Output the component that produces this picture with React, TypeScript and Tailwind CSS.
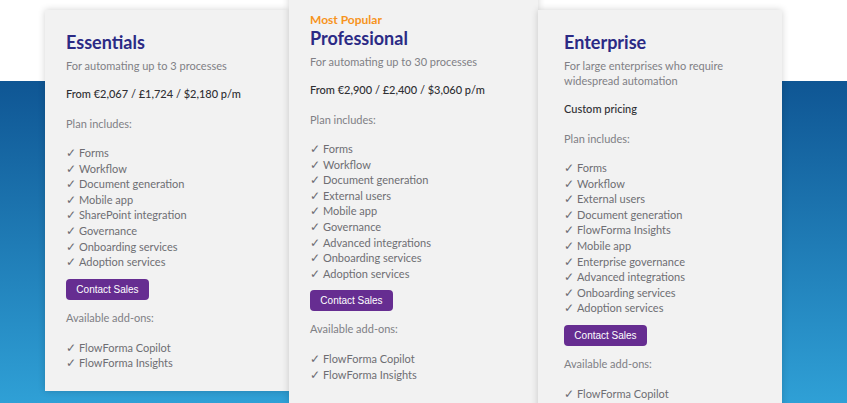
import React from "react";

type Plan = {
  name: string;
  badge?: string;
  desc: string[];
  price: string;
  features: string[];
  addons: string[];
};

const plans: Plan[] = [
  {
    name: "Essentials",
    desc: ["For automating up to 3 processes"],
    price: "From €2,067 / £1,724 / $2,180 p/m",
    features: [
      "Forms",
      "Workflow",
      "Document generation",
      "Mobile app",
      "SharePoint integration",
      "Governance",
      "Onboarding services",
      "Adoption services",
    ],
    addons: ["FlowForma Copilot", "FlowForma Insights"],
  },
  {
    name: "Professional",
    badge: "Most Popular",
    desc: ["For automating up to 30 processes"],
    price: "From €2,900 / £2,400 / $3,060 p/m",
    features: [
      "Forms",
      "Workflow",
      "Document generation",
      "External users",
      "Mobile app",
      "Governance",
      "Advanced integrations",
      "Onboarding services",
      "Adoption services",
    ],
    addons: ["FlowForma Copilot", "FlowForma Insights"],
  },
  {
    name: "Enterprise",
    desc: ["For large enterprises who require", "widespread automation"],
    price: "Custom pricing",
    features: [
      "Forms",
      "Workflow",
      "External users",
      "Document generation",
      "FlowForma Insights",
      "Mobile app",
      "Enterprise governance",
      "Advanced integrations",
      "Onboarding services",
      "Adoption services",
    ],
    addons: ["FlowForma Copilot", "FlowForma Insights"],
  },
];

const CheckList: React.FC<{ items: string[] }> = ({ items }) => (
  <ul className="text-[11px] leading-[15.6px] text-[#6e6e73]">
    {items.map((item) => (
      <li key={item} className="flex">
        <span className="w-[13px] text-[12px]">✓</span>
        <span>{item}</span>
      </li>
    ))}
  </ul>
);

const PlanCard: React.FC<{ plan: Plan; className: string }> = ({ plan, className }) => (
  <div
    className={`relative shrink-0 bg-[#f2f2f2] pt-[20px] pb-[20px] shadow-[0_0_7px_rgba(0,0,0,0.18)] ${className}`}
  >
    {plan.badge && (
      <div className="mb-[-1px] text-[12px] leading-[14px] font-bold text-[#f7941d]">{plan.badge}</div>
    )}
    <h2 className="text-[18px] leading-[24px] font-bold text-[#2b2a85]">{plan.name}</h2>
    <p className="mt-[4px] text-[11px] leading-[15px] text-[#808085]">
      {plan.desc.map((line) => (
        <span key={line} className="block">
          {line}
        </span>
      ))}
    </p>
    <div className="mt-[13px] text-[11px] leading-[16px] font-medium text-[#2f2f33]">{plan.price}</div>
    <div className="mt-[14px] text-[11px] leading-[16px] text-[#808085]">Plan includes:</div>
    <div className="mt-[13px]">
      <CheckList items={plan.features} />
    </div>
    <button className="mt-[9px] flex h-[21px] w-[83px] items-center justify-center rounded-[4px] bg-[#662d91] font-['Liberation_Sans',Arial,sans-serif] text-[10px] text-white">
      Contact Sales
    </button>
    <div className="mt-[10px] text-[11px] leading-[16px] text-[#808085]">Available add-ons:</div>
    <div className="mt-[14px]">
      <CheckList items={plan.addons} />
    </div>
  </div>
);

export default function App() {
  return (
    <div className="h-[403px] w-full overflow-hidden bg-[linear-gradient(to_bottom,#ffffff_81px,#0f5694_81px,#2fa0d6_403px)] font-['Lato','Noto_Sans',sans-serif]">
      <div className="flex items-start pl-[45px]">
        <PlanCard plan={plans[0]} className="mt-[10px] w-[244px] pl-[21px]" />
        <PlanCard plan={plans[1]} className="-mt-[7px] w-[249px] pl-[21px]" />
        <PlanCard plan={plans[2]} className="mt-[10px] w-[244px] pl-[26px]" />
      </div>
    </div>
  );
}
